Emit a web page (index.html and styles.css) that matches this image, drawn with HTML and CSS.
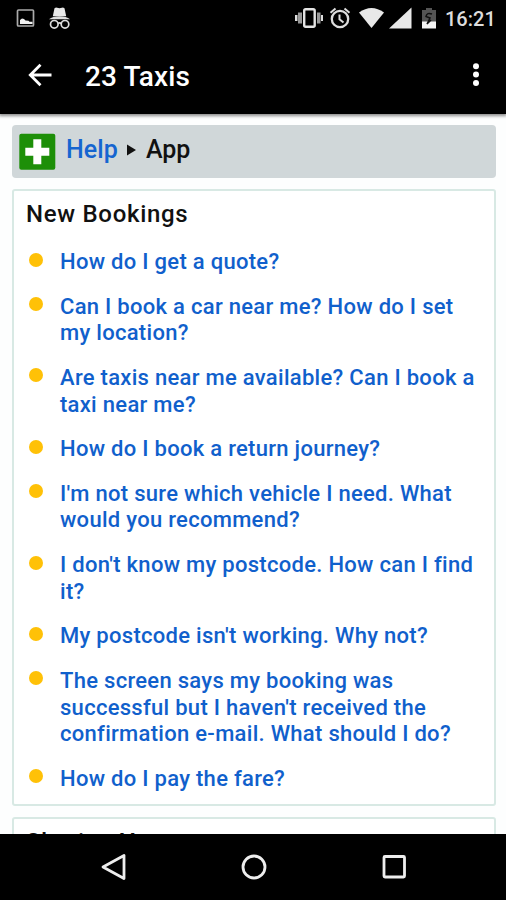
FILE: index.html
```html
<!DOCTYPE html>
<html lang="en">
<head>
<meta charset="utf-8">
<title>23 Taxis</title>
<link rel="stylesheet" href="styles.css">
</head>
<body>
<div class="screen">
  <header class="top">
    <div class="status">
      <svg class="status-left" width="60" height="30" viewBox="0 0 60 30">
        <rect x="7.500" y="6" width="16" height="16" rx="1" fill="none" stroke="#aaa" stroke-width="1.700"/>
        <path d="M10 20v-4l2-1.500 2 .5 1.500 1.500 3 .3 1 1H22.500V20z" fill="#f2f2f2"/>
        <path d="M44.500 4.300l1.500-.8 3.500.7 3.500-.7 1.500.8 1.700 8h-13.400z" fill="#e8e8e8"/>
        <path d="M39 15.300q3.500-3 10.500-3t10.500 3z" fill="#ddd"/>
        <g fill="none" stroke="#ddd" stroke-width="1.700"><circle cx="44.300" cy="20.300" r="3.800"/><circle cx="55" cy="20.300" r="3.800"/><path d="M48 19.500q1.700-1.400 3.400 0"/></g>
      </svg>
      <svg class="status-right" width="146" height="30" viewBox="0 0 146 30">
        <rect x="10.200" y="5.200" width="10.500" height="17.500" rx="1.500" fill="none" stroke="#e4e4e4" stroke-width="2.400"/>
        <path d="M4 8.500h4v11H4zM23 8.500h3.500v11H23z" fill="#999"/><path d="M1 11h2.500v6H1zM27 11h2v6h-2z" fill="#ddd"/>
        <g fill="none" stroke="#ddd"><circle cx="46" cy="15" r="8.200" stroke-width="2.300"/><path d="M45.500 10.500v4.800l4 3.200" stroke-width="2"/><path d="M36.500 8.800l5-4.300M55.500 8.800l-5-4.300" stroke-width="2"/></g>
        <path d="M65 8.500Q77.500-.5 90 8.500L77.500 24z" fill="#e8e8e8"/>
        <path d="M95 24.500L117.500 3.500v21z" fill="#e8e8e8"/>
        <path d="M132 4h6v2h4v14h-14V6h4z" fill="#555"/><path d="M128 17.500h14v7h-14z" fill="#f5f5f5"/>
        <path d="M138 10q-5-2-6 2.500l4 1.500-3 6 4-4" fill="none" stroke="#111" stroke-width="1.500"/>
      </svg>
      <span class="clock">16:21</span>
    </div>
    <div class="bar">
      <svg class="back" width="24" height="24" viewBox="0 0 24 24"><path d="M23.500 12H2.500M12.500 1.800L2.300 12l10.200 10.200" fill="none" stroke="#fff" stroke-width="2.800"/></svg>
      <h1>23 Taxis</h1>
      <svg class="more" width="8" height="26" viewBox="0 0 8 26" fill="#fff"><circle cx="4" cy="4.200" r="3"/><circle cx="4" cy="12.500" r="3"/><circle cx="4" cy="21" r="3"/></svg>
    </div>
  </header>
  <main>
    <nav class="crumbs">
      <svg width="37" height="37" viewBox="0 0 37 37"><rect x=".3" y=".8" width="36" height="36" rx="2" fill="#1d8f08"/><path d="M14.300 6.200h8v8.500h8v8h-8v8.500h-8v-8.500h-8v-8h8z" fill="#fff"/></svg>
      <a>Help</a>
      <svg class="arrow" width="9" height="12" viewBox="0 0 9 12"><path d="M0 .5L9 6 0 11.500z" fill="#111"/></svg>
      <span>App</span>
    </nav>
    <section class="panel">
      <h2>New Bookings</h2>
      <ul>
        <li>How do I get a quote?</li>
        <li>Can I book a car near me? How do I set<br>my location?</li>
        <li>Are taxis near me available? Can I book a<br>taxi near me?</li>
        <li>How do I book a return journey?</li>
        <li>I'm not sure which vehicle I need. What<br>would you recommend?</li>
        <li>I don't know my postcode. How can I find<br>it?</li>
        <li>My postcode isn't working. Why not?</li>
        <li>The screen says my booking was<br>successful but I haven't received the<br>confirmation e-mail. What should I do?</li>
        <li>How do I pay the fare?</li>
      </ul>
    </section>
    <section class="panel"><h2>Sharing Your</h2></section>
  </main>
  <footer>
    <svg width="28" height="28" viewBox="0 0 28 28"><path d="M3 14L24 2.500v23z"/></svg>
    <svg width="28" height="28" viewBox="0 0 28 28"><circle cx="14" cy="14" r="11"/></svg>
    <svg width="28" height="28" viewBox="0 0 28 28"><rect x="4" y="3.500" width="20.500" height="20.500" rx="1"/></svg>
  </footer>
</div>
</body>
</html>
```
FILE: styles.css
```css
* { box-sizing: border-box; }
body { margin: 0; font-family: Roboto, "Liberation Sans", sans-serif; background: #fdfefe; }
.screen { width: 506px; height: 900px; display: flex; flex-direction: column; overflow: hidden; }
.top { height: 114px; flex: none; background: #000; color: #fff; box-shadow: 0 1px 3px 1px rgba(0,0,0,.45); z-index: 1; }
.status { height: 38px; display: flex; padding: 4px 11px 0 10px; }
.status-right { margin-left: auto; }
.clock { width: 50px; margin-left: 5px; font-size: 20px; line-height: 30px; font-weight: 500; color: #ddd; }
.bar { height: 76px; display: flex; align-items: center; padding: 0 26px 2px 28px; }
h1 { margin: 4px 0 0 33px; font-size: 28px; line-height: 34px; font-weight: 500; letter-spacing: .1px; }
.more { margin-left: auto; }
main { flex: 1; min-height: 0; overflow: hidden; padding: 11px 10px 0 12px; }
.crumbs { height: 53px; display: flex; align-items: center; background: #d0d7d9; border-radius: 4px; padding-left: 7px; font-size: 25px; font-weight: 500; color: #111; }
.crumbs a { color: #1565d0; margin: -4px 9px 0 10px; letter-spacing: .1px; }
.crumbs span { margin: -4px 0 0 10px; }
.arrow { margin-top: -4px; }
.panel { margin-top: 11px; border: 2px solid #d8e9e4; border-radius: 3px; height: 617px; background: #fff; padding: 8px 12px 0; }
h2 { margin: 0; font-size: 24px; line-height: 30px; font-weight: 500; letter-spacing: .7px; color: #111; }
ul { list-style: none; margin: 20px 0 0; padding: 0 0 0 34px; }
li { position: relative; font-size: 22px; line-height: 26.700px; font-weight: 500; letter-spacing: .29px; color: #1060cc; white-space: nowrap; margin-bottom: 17.900px; }
li::before { content: ""; position: absolute; left: -31px; top: 3.500px; width: 14px; height: 14px; border-radius: 50%; background: #ffc107; }
footer { height: 66px; flex: none; background: #000; display: flex; justify-content: center; gap: 112px; padding: 19px 0 0 1px; }
footer svg { fill: none; stroke: #eee; stroke-width: 2.800; stroke-linejoin: round; }
```
